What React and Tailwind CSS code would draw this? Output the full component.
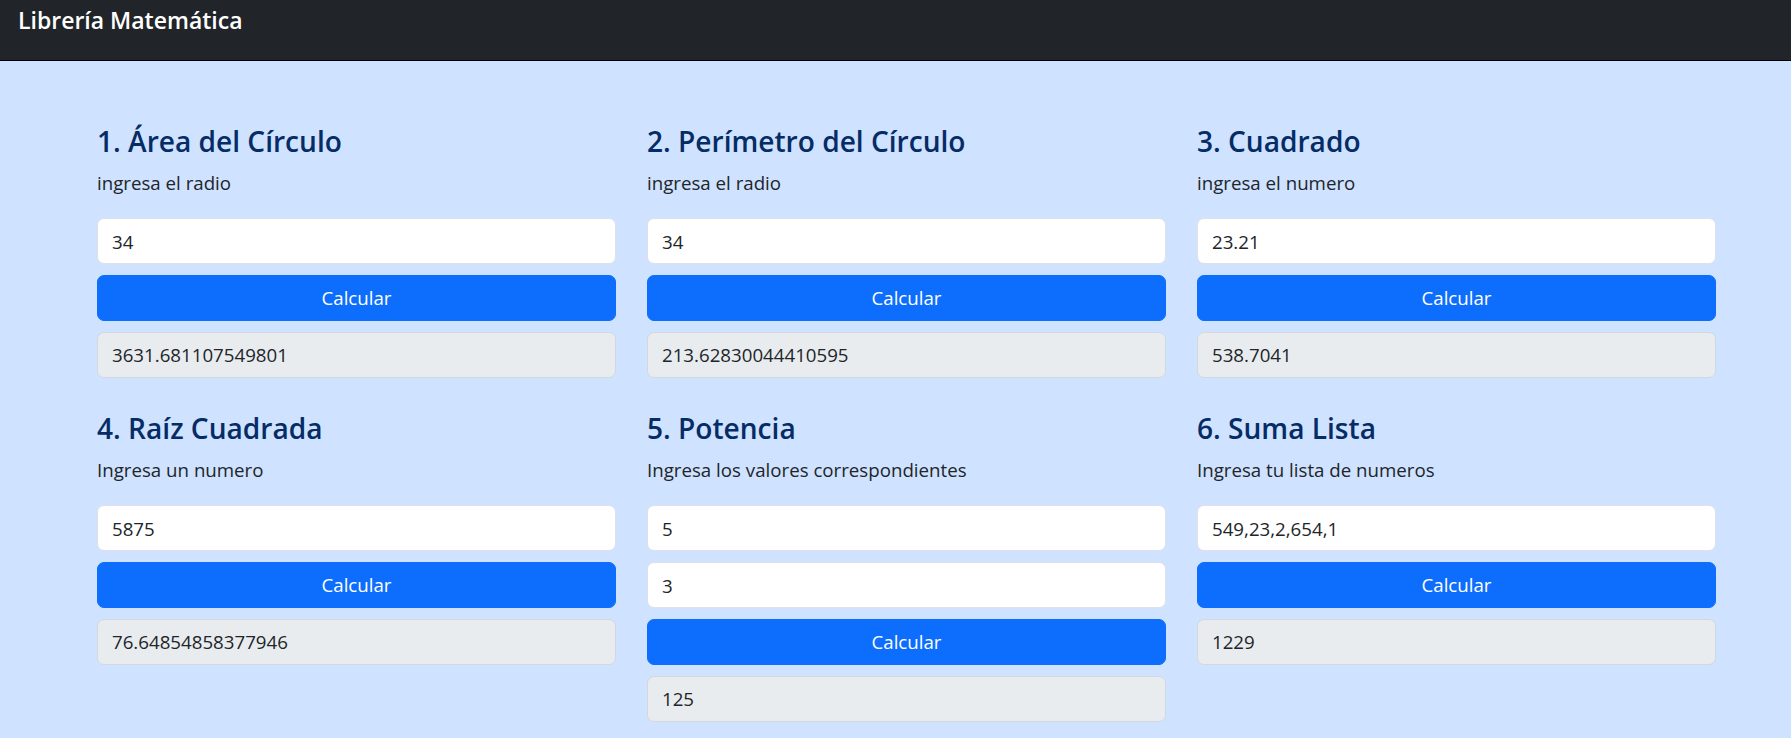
import React, { useState } from "react";

const inputCls =
  "h-[46px] w-full rounded-[7px] border border-[#dee2e6] bg-white px-[14px] text-[18.7px] text-[#212529] outline-none";
const resultCls =
  "flex h-[46px] w-full items-center rounded-[7px] border border-[#d3d8dd] bg-[#e9ecef] px-[14px] text-[18.7px] text-[#212529]";
const btnCls =
  "h-[46px] w-full rounded-[7px] border border-[#0d6efd] bg-[#0d6efd] text-[18.7px] text-white hover:bg-[#0b5ed7]";

function Card({ title, hint, fields, result, onCalc }) {
  return (
    <div className="flex flex-col">
      <h4 className="mb-[11px] text-[28.1px] font-semibold leading-[34px] text-[#052c65]">
        {title}
      </h4>
      <p className="mb-[21px] text-[18.7px] leading-[28px] text-[#212529]">
        {hint}
      </p>
      <div className="flex flex-col gap-[11px]">
        {fields.map((f, i) => (
          <input
            key={i}
            type="text"
            value={f.value}
            onChange={(e) => f.set(e.target.value)}
            className={inputCls}
          />
        ))}
        <button className={btnCls} onClick={onCalc}>
          Calcular
        </button>
        <div className={resultCls}>{result}</div>
      </div>
    </div>
  );
}

export default function App() {
  const [radio1, setRadio1] = useState("34");
  const [radio2, setRadio2] = useState("34");
  const [cuad, setCuad] = useState("23.21");
  const [raiz, setRaiz] = useState("5875");
  const [base, setBase] = useState("5");
  const [exp, setExp] = useState("3");
  const [lista, setLista] = useState("549,23,2,654,1");

  const [res, setRes] = useState({
    area: "3631.681107549801",
    perimetro: "213.62830044410595",
    cuadrado: "538.7041",
    raiz: "76.64854858377946",
    potencia: "125",
    suma: "1229",
  });

  const put = (k, v) => setRes((prev) => ({ ...prev, [k]: String(v) }));

  return (
    <div className="min-h-screen bg-[#cfe2ff] font-['Open_Sans',sans-serif]">
      {/* navbar */}
      <nav className="h-[61px] border-b border-black bg-[#212529] px-[18px] pt-[2px]">
        <span className="text-[23px] font-semibold leading-[36px] text-white">
          Librería Matemática
        </span>
      </nav>

      <div className="grid grid-cols-[519px_519px_519px] gap-x-[31px] gap-y-[33px] pb-[20px] pl-[97px] pt-[63px]">
        <Card
          title="1. Área del Círculo"
          hint="ingresa el radio"
          fields={[{ value: radio1, set: setRadio1 }]}
          result={res.area}
          onCalc={() => put("area", Math.PI * Number(radio1) ** 2)}
        />
        <Card
          title="2. Perímetro del Círculo"
          hint="ingresa el radio"
          fields={[{ value: radio2, set: setRadio2 }]}
          result={res.perimetro}
          onCalc={() => put("perimetro", 2 * Math.PI * Number(radio2))}
        />
        <Card
          title="3. Cuadrado"
          hint="ingresa el numero"
          fields={[{ value: cuad, set: setCuad }]}
          result={res.cuadrado}
          onCalc={() => put("cuadrado", Number(cuad) * Number(cuad))}
        />
        <Card
          title="4. Raíz Cuadrada"
          hint="Ingresa un numero"
          fields={[{ value: raiz, set: setRaiz }]}
          result={res.raiz}
          onCalc={() => put("raiz", Math.sqrt(Number(raiz)))}
        />
        <Card
          title="5. Potencia"
          hint="Ingresa los valores correspondientes"
          fields={[
            { value: base, set: setBase },
            { value: exp, set: setExp },
          ]}
          result={res.potencia}
          onCalc={() => put("potencia", Number(base) ** Number(exp))}
        />
        <Card
          title="6. Suma Lista"
          hint="Ingresa tu lista de numeros"
          fields={[{ value: lista, set: setLista }]}
          result={res.suma}
          onCalc={() =>
            put(
              "suma",
              lista
                .split(",")
                .map((n) => Number(n.trim()) || 0)
                .reduce((a, b) => a + b, 0)
            )
          }
        />
      </div>
    </div>
  );
}
